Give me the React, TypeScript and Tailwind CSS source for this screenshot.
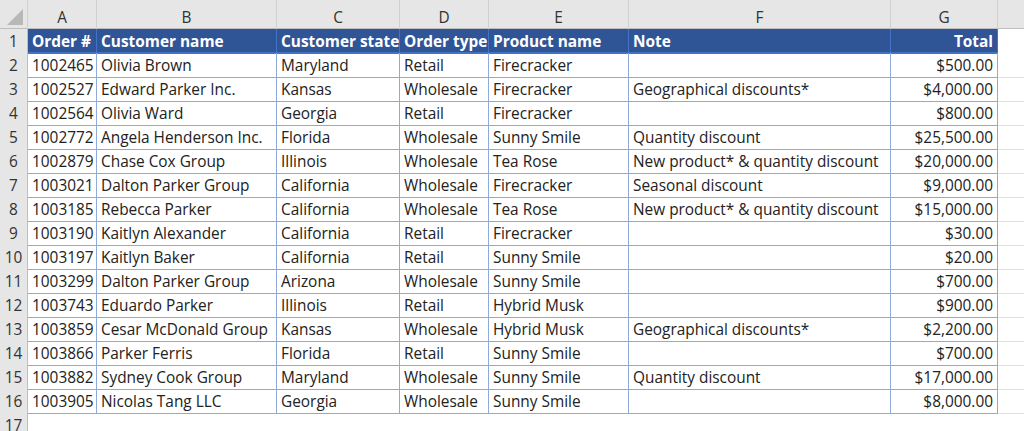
const rows: string[][] = [
["1002465","Olivia Brown","Maryland","Retail","Firecracker","","$500.00"],
["1002527","Edward Parker Inc.","Kansas","Wholesale","Firecracker","Geographical discounts*","$4,000.00"],
["1002564","Olivia Ward","Georgia","Retail","Firecracker","","$800.00"],
["1002772","Angela Henderson Inc.","Florida","Wholesale","Sunny Smile","Quantity discount","$25,500.00"],
["1002879","Chase Cox Group","Illinois","Wholesale","Tea Rose","New product* & quantity discount","$20,000.00"],
["1003021","Dalton Parker Group","California","Wholesale","Firecracker","Seasonal discount","$9,000.00"],
["1003185","Rebecca Parker","California","Wholesale","Tea Rose","New product* & quantity discount","$15,000.00"],
["1003190","Kaitlyn Alexander","California","Retail","Firecracker","","$30.00"],
["1003197","Kaitlyn Baker","California","Retail","Sunny Smile","","$20.00"],
["1003299","Dalton Parker Group","Arizona","Wholesale","Sunny Smile","","$700.00"],
["1003743","Eduardo Parker","Illinois","Retail","Hybrid Musk","","$900.00"],
["1003859","Cesar McDonald Group","Kansas","Wholesale","Hybrid Musk","Geographical discounts*","$2,200.00"],
["1003866","Parker Ferris","Florida","Retail","Sunny Smile","","$700.00"],
["1003882","Sydney Cook Group","Maryland","Wholesale","Sunny Smile","Quantity discount","$17,000.00"],
["1003905","Nicolas Tang LLC","Georgia","Wholesale","Sunny Smile","","$8,000.00"],
];
const heads = ["Order #","Customer name","Customer state","Order type","Product name","Note","Total"];
const cols = "grid grid-cols-[28px_69px_180px_123px_89px_140px_262px_107px_1fr]";
const letters = ["A","B","C","D","E","F","G"];

export default function App() {
  return (
    <div className="w-[1024px] h-[431px] overflow-hidden bg-white text-[15.4px] text-[#222]" style={{fontFamily:'"Open Sans","Noto Sans",sans-serif'}}>
      <div className={cols + " h-[29px] bg-[#e6e6e6] border-b border-[#bdbdbd]"}>
        <div className="border-r border-[#d0d0d0] relative">
          <svg className="absolute right-1 bottom-1" width="16" height="16"><polygon points="16,0 16,16 0,16" fill="#b8b8b8"/></svg>
        </div>
        {letters.map(l => <div key={l} className="border-r border-[#d0d0d0] flex items-center justify-center pt-[6px] text-[#333]">{l}</div>)}
        <div />
      </div>
      <div className={cols + " h-[24px]"}>
        <div className="bg-[#e6e6e6] border-r border-[#bdbdbd] border-b border-b-[#d8d8d8] flex items-center justify-center pt-[1px] text-[#333]">1</div>
        {heads.map((h,i) => <div key={h} className={"bg-[#2f5597] text-white font-bold flex items-center px-1 pt-[1px] border-r border-[#4472c4] border-b-2 border-b-[#4472c4] whitespace-nowrap overflow-hidden " + (i===6?"justify-end":"")}>{h}</div>)}
        <div />
      </div>
      {rows.map((r,ri) => (
        <div key={ri} className={cols + " h-[24px]"}>
          <div className="bg-[#e6e6e6] border-r border-[#bdbdbd] border-b border-b-[#d8d8d8] flex items-center justify-center pt-[1px] text-[#333]">{ri+2}</div>
          {r.map((c,ci) => <div key={ci} className={"flex items-center px-1 pt-[1px] border-r border-b border-[#8eaadb] whitespace-nowrap overflow-hidden " + (ci===6?"justify-end":"")}>{c}</div>)}
          <div className="border-b border-[#e1e1e1]" />
        </div>
      ))}
      <div className={cols + " h-[24px]"}>
        <div className="bg-[#e6e6e6] border-r border-[#bdbdbd] flex items-center justify-center pt-[1px] text-[#333]">17</div>
      </div>
    </div>
  );
}
